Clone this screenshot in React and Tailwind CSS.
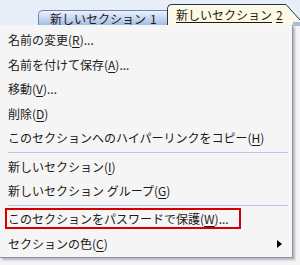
export default function App() {
  const U = ({ c }) => <span className="underline underline-offset-[2px]">{c}</span>;
  const Row = ({ children }) => (
    <div className="h-[24.5px] flex items-center pl-[8px] whitespace-nowrap">{children}</div>
  );
  const Sep = () => (
    <div className="h-[4px] flex items-center">
      <div className="h-px flex-1 ml-[8px] mr-[4px] bg-[#b3cbe6]" />
    </div>
  );
  return (
    <div className="w-[300px] h-[265px] bg-[#f4f4f4] overflow-hidden font-['Noto_Sans_CJK_JP','Noto_Sans',sans-serif] text-[12px] text-[#1a1a1a]">
      {/* tab strip */}
      <div className="h-[25px] bg-[#e8eef8] flex items-end">
        <div className="w-[38px] shrink-0" />
        <div className="w-[129px] h-[15px] shrink-0 rounded-tl-[5px] border-l border-t border-[#6f86ab] bg-gradient-to-b from-[#eef3fb] to-[#a4bde3] pl-[11px] text-[12px] leading-[15px] whitespace-nowrap">
          新しいセクション<span className="ml-[4px]">1</span>
        </div>
        <div className="flex h-[21px] shrink-0">
          <div className="w-[119px] rounded-tl-[5px] border-l border-t border-[#22355f] bg-[#fdf9e4] pl-[8px] leading-[20px] whitespace-nowrap">
            <span className="underline underline-offset-[2px]">新しいセクション<span className="pl-[4px]">2</span></span>
          </div>
          <svg width="14" height="21" viewBox="0 0 14 21" className="block">
            <polygon points="0,0.5 0,21 14,21 14,16" fill="#fdf9e4" />
            <line x1="0" y1="0.5" x2="14" y2="16" stroke="#22355f" strokeWidth="1" />
          </svg>
        </div>
      </div>
      <div className="flex">
        <div className="w-[293px] shrink-0 h-[233px] bg-[#f5f5f5] border-r border-b border-[#8596b0] shadow-[2px_2px_2px_rgba(0,0,0,0.25)] pt-[3px] relative z-10">
          <Row>名前の変更(<U c="R" />)...</Row>
          <Row>名前を付けて保存(<U c="A" />)...</Row>
          <Row>移動(<U c="V" />)...</Row>
          <Row>削除(<U c="D" />)</Row>
          <Row>このセクションへのハイパーリンクをコピー(<U c="H" />)</Row>
          <Sep />
          <Row>新しいセクション(<U c="I" />)</Row>
          <Row>新しいセクション グループ(<U c="G" />)</Row>
          <Sep />
          <div className="h-[24.5px] pt-[0.5px]">
            <div className="ml-[5px] w-[236px] h-[21px] border-2 border-[#d40000] pl-px flex items-center whitespace-nowrap">
              このセクションをパスワードで保護(<U c="W" />)...
            </div>
          </div>
          <div className="h-[24.5px] flex items-center pl-[8px] pr-[10px]">
            <span>セクションの色(<U c="C" />)</span>
            <span className="ml-auto w-0 h-0 border-y-[4px] border-y-transparent border-l-[5px] border-l-black" />
          </div>
        </div>
        <div className="flex-1">
          <div className="h-[4px] -mt-[3px] bg-[#a3bde2]" />
        </div>
      </div>
    </div>
  );
}
